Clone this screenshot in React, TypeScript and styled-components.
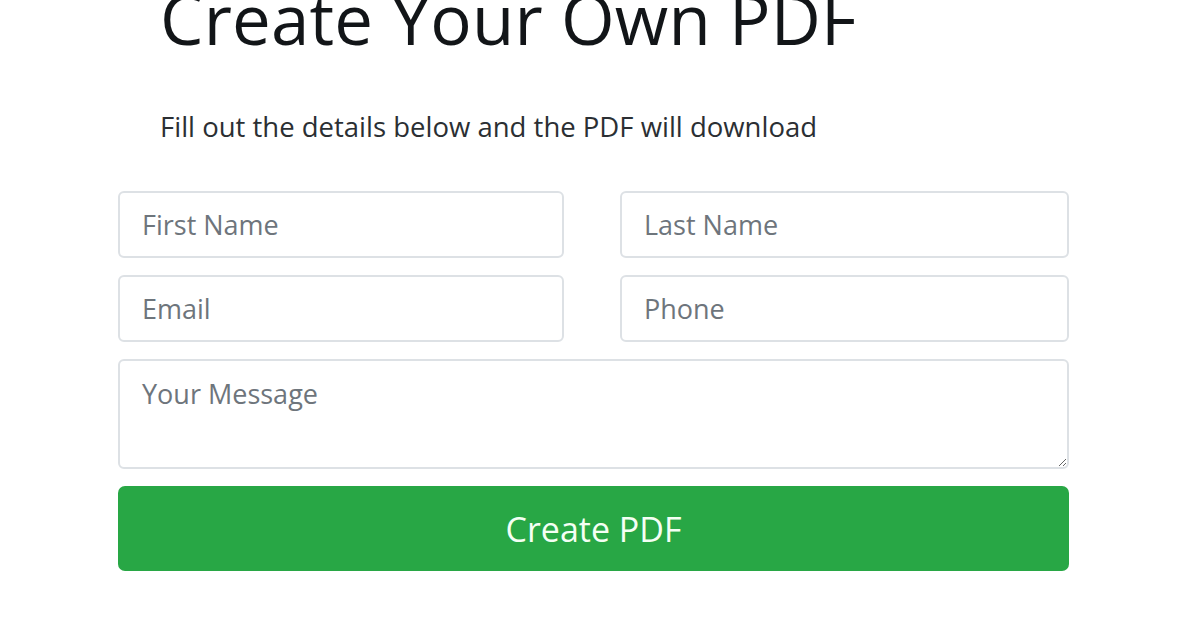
import React from "react";
import styled, { createGlobalStyle } from "styled-components";

const GlobalStyle = createGlobalStyle`
  html, body {
    margin: 0;
    padding: 0;
    background: #ffffff;
    font-family: "Open Sans", "Noto Sans", "Liberation Sans", sans-serif;
    color: #212529;
  }
  * { box-sizing: border-box; }
`;

export default function App() {
  return (
    <>
      <GlobalStyle />
      <Page>
        <Intro>
          <Title>Create Your Own PDF</Title>
          <Lead>Fill out the details below and the PDF will download</Lead>
        </Intro>
        <Form onSubmit={(e) => e.preventDefault()}>
          <Row>
            <Field placeholder="First Name" />
            <Field placeholder="Last Name" />
          </Row>
          <Row>
            <Field placeholder="Email" />
            <Field placeholder="Phone" />
          </Row>
          <Message placeholder="Your Message" />
          <Submit type="submit">Create PDF</Submit>
        </Form>
      </Page>
    </>
  );
}

const Page = styled.main`
  width: 951px;
  margin-left: 118px;
`;

const Intro = styled.header`
  padding-left: 42px;
`;

const Title = styled.h1`
  margin: -23px 0 0;
  font-size: 69px;
  font-weight: 500;
  line-height: 1.2;
  color: #121518;
  letter-spacing: 0.2px;
`;

const Lead = styled.p`
  margin: 48px 0 0;
  font-size: 27.5px;
  line-height: 1.4;
  color: #2b2f33;
`;

const Form = styled.form`
  display: flex;
  flex-direction: column;
  gap: 17px;
  margin-top: 45px;
`;

const Row = styled.div`
  display: grid;
  grid-template-columns: 446px 1fr;
  column-gap: 56px;
`;

const Field = styled.input`
  height: 67px;
  padding: 0 22px;
  border: 2px solid #dde1e5;
  border-radius: 6px;
  font-family: inherit;
  font-size: 27px;
  color: #495057;
  background: #fff;
  outline: none;
  &::placeholder {
    color: #6e757c;
  }
`;

const Message = styled.textarea`
  height: 110px;
  padding: 14px 22px;
  border: 2px solid #dde1e5;
  border-radius: 6px;
  font-family: inherit;
  font-size: 27px;
  color: #495057;
  resize: vertical;
  outline: none;
  &::placeholder {
    color: #6e757c;
  }
`;

const Submit = styled.button`
  height: 85px;
  border: none;
  border-radius: 7px;
  background: #28a745;
  color: #f4fff4;
  font-family: inherit;
  font-size: 34px;
  cursor: pointer;
`;
